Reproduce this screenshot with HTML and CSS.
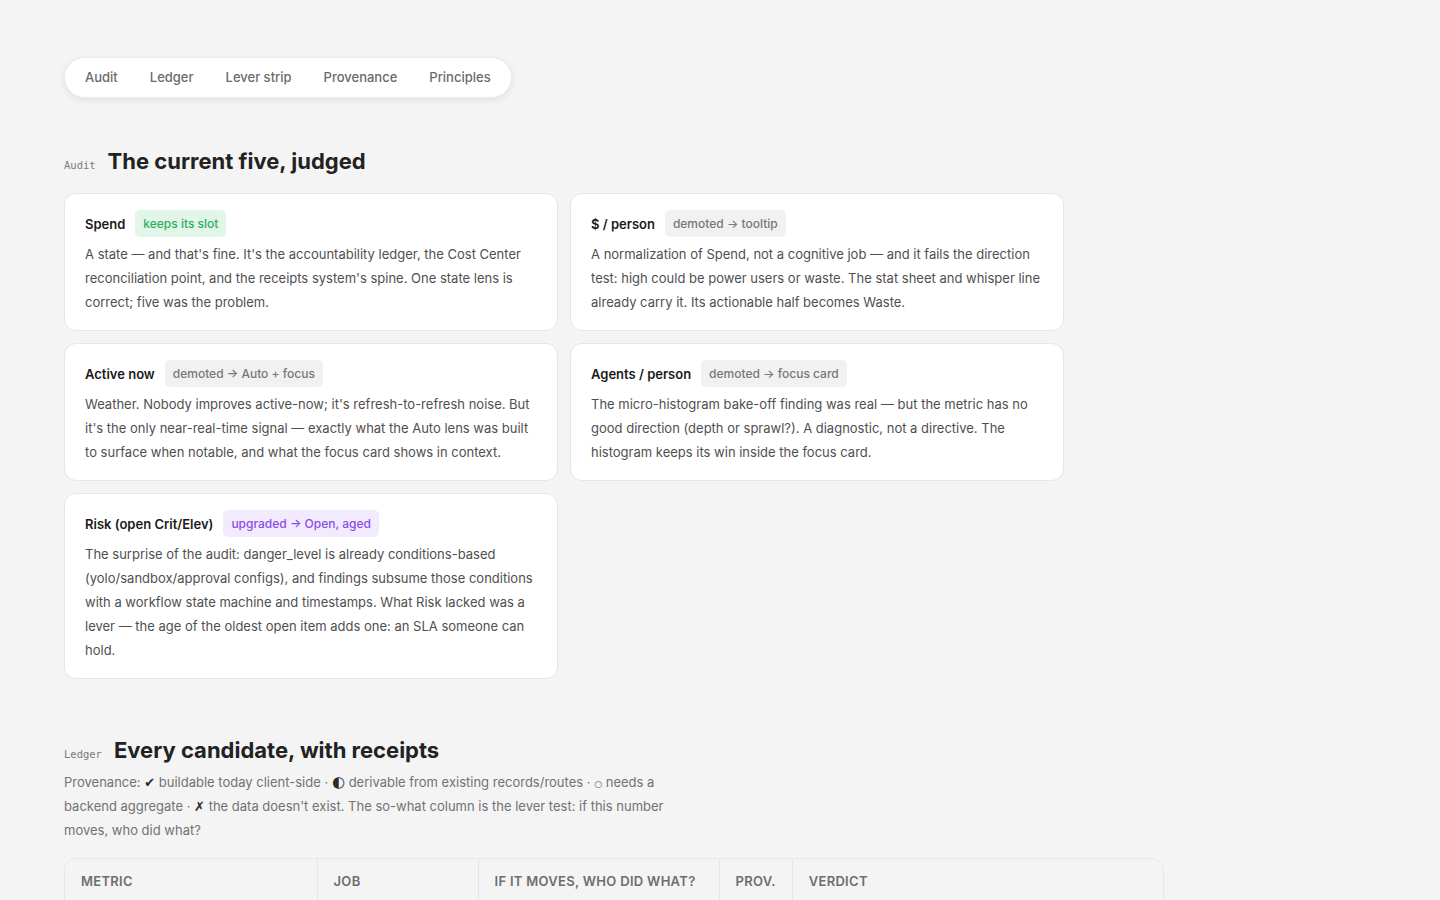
FILE: index.html
```html
<!DOCTYPE html>
<html lang="en">
<head>
<meta charset="utf-8">
<title>Lens audit</title>
<link rel="stylesheet" href="styles.css">
</head>
<body>
<main class="page">
  <nav class="tabs">
    <a class="tab" href="#audit">Audit</a>
    <a class="tab" href="#ledger">Ledger</a>
    <a class="tab" href="#lever">Lever strip</a>
    <a class="tab" href="#provenance">Provenance</a>
    <a class="tab" href="#principles">Principles</a>
  </nav>

  <section class="section" id="audit">
    <header class="section-head">
      <span class="kicker">Audit</span>
      <h2 class="section-title">The current five, judged</h2>
    </header>
    <div class="cards">
      <article class="card">
        <div class="card-head">
          <h3 class="card-title">Spend</h3>
          <span class="chip chip-keep">keeps its slot</span>
        </div>
        <p class="card-body">A state — and that's fine. It's the accountability ledger, the Cost Center reconciliation point, and the receipts system's spine. One state lens is correct; five was the problem.</p>
      </article>
      <article class="card">
        <div class="card-head">
          <h3 class="card-title">$ / person</h3>
          <span class="chip chip-demote">demoted → tooltip</span>
        </div>
        <p class="card-body">A normalization of Spend, not a cognitive job — and it fails the direction test: high could be power users or waste. The stat sheet and whisper line already carry it. Its actionable half becomes Waste.</p>
      </article>
      <article class="card">
        <div class="card-head">
          <h3 class="card-title">Active now</h3>
          <span class="chip chip-demote">demoted → Auto + focus</span>
        </div>
        <p class="card-body">Weather. Nobody improves active-now; it's refresh-to-refresh noise. But it's the only near-real-time signal — exactly what the Auto lens was built to surface when notable, and what the focus card shows in context.</p>
      </article>
      <article class="card">
        <div class="card-head">
          <h3 class="card-title">Agents / person</h3>
          <span class="chip chip-demote">demoted → focus card</span>
        </div>
        <p class="card-body">The micro-histogram bake-off finding was real — but the metric has no good direction (depth or sprawl?). A diagnostic, not a directive. The histogram keeps its win inside the focus card.</p>
      </article>
      <article class="card">
        <div class="card-head">
          <h3 class="card-title">Risk (open Crit/Elev)</h3>
          <span class="chip chip-upgrade">upgraded → Open, aged</span>
        </div>
        <p class="card-body">The surprise of the audit: danger_level is already conditions-based (yolo/sandbox/approval configs), and findings subsume those conditions with a workflow state machine and timestamps. What Risk lacked was a lever — the age of the oldest open item adds one: an SLA someone can hold.</p>
      </article>
    </div>
  </section>

  <section class="section" id="ledger">
    <header class="section-head">
      <span class="kicker">Ledger</span>
      <h2 class="section-title">Every candidate, with receipts</h2>
    </header>
    <p class="lede">Provenance: <span class="sym">✔</span> buildable today client-side · <span class="sym sym-half">◐</span> derivable from existing records/routes · <span class="sym sym-small">○</span> needs a backend aggregate · <span class="sym">✗</span> the data doesn't exist. The so-what column is the lever test: if this number moves, who did what?</p>
    <div class="table-wrap">
      <table class="ledger">
        <thead>
          <tr>
            <th class="col-metric">Metric</th>
            <th class="col-job">Job</th>
            <th class="col-sowhat">If it moves, who did what?</th>
            <th class="col-prov">Prov.</th>
            <th class="col-verdict">Verdict</th>
          </tr>
        </thead>
        <tbody>
          <tr>
            <td>Spend</td>
            <td>State</td>
            <td>Finance reconciles against the Cost Center</td>
            <td><span class="sym">✔</span></td>
            <td>Keep</td>
          </tr>
          <tr>
            <td>Waste</td>
            <td>Lever</td>
            <td>An owner trimmed idle seats or runaway agents</td>
            <td><span class="sym sym-half">◐</span></td>
            <td>Add</td>
          </tr>
        </tbody>
      </table>
    </div>
  </section>
</main>
</body>
</html>
```

FILE: styles.css
```css
* {
  box-sizing: border-box;
}

html,
body {
  margin: 0;
  padding: 0;
  background: #f4f4f4;
}

body {
  font-family: Inter, "Noto Sans", "Liberation Sans", sans-serif;
  color: #1f1f1f;
  -webkit-font-smoothing: antialiased;
}

.page {
  padding: 57px 64px 64px;
}

/* Section switcher */
.tabs {
  display: inline-flex;
  align-items: center;
  height: 41px;
  padding: 0 4px;
  background: #ffffff;
  border: 1px solid #ececec;
  border-radius: 999px;
  box-shadow: 0 2px 6px rgba(0, 0, 0, 0.08);
}

.tab {
  padding: 0 16px;
  font-size: 13px;
  font-weight: 500;
  color: #6b6b6b;
  text-decoration: none;
  line-height: 39px;
}

/* Sections */
.section {
  margin-top: 50px;
}

.section + .section {
  margin-top: 58px;
}

.section-head {
  display: flex;
  align-items: baseline;
  gap: 12px;
  margin-bottom: 19px;
}

.kicker {
  font-family: "DejaVu Sans Mono", "Liberation Mono", monospace;
  font-size: 10.5px;
  color: #7a7a7a;
}

.section-title {
  margin: 0;
  font-size: 22px;
  font-weight: 700;
  color: #222222;
}

/* Audit cards */
.cards {
  display: grid;
  grid-template-columns: repeat(2, 494px);
  gap: 12px;
}

.card {
  background: #ffffff;
  border: 1px solid #e6e6e6;
  border-radius: 12px;
  padding: 16px 20px;
}

.card-head {
  display: flex;
  align-items: center;
  gap: 10px;
  margin-bottom: 5px;
}

.card-title {
  margin: 0;
  font-size: 13px;
  font-weight: 600;
  color: #1a1a1a;
}

.chip {
  display: inline-block;
  padding: 4px 8px;
  border-radius: 5px;
  font-size: 12px;
  font-weight: 500;
  line-height: 19px;
}

.chip-keep {
  background: #e1f5e8;
  color: #2fae5c;
}

.chip-demote {
  background: #f1f1f1;
  color: #777777;
}

.chip-upgrade {
  background: #f1ebfd;
  color: #8b4ce8;
}

.card-body {
  margin: 0;
  font-size: 13px;
  line-height: 24px;
  color: #4f4f4f;
}

/* Ledger */
#ledger .section-head {
  margin-bottom: 7px;
}

.lede {
  max-width: 620px;
  margin: 0 0 16px;
  font-size: 13px;
  line-height: 24px;
  color: #727272;
}

.sym {
  font-family: "DejaVu Sans", sans-serif;
  line-height: 0;
  color: #2a2a2a;
}

.sym-half {
  font-size: 15px;
}

.sym-small {
  font-size: 9px;
  color: #555555;
}

.table-wrap {
  width: 1100px;
  border: 1px solid #e6e6e6;
  border-radius: 12px;
  overflow: hidden;
}

.ledger {
  width: 100%;
  border-collapse: collapse;
  font-size: 13px;
}

.ledger th {
  height: 44px;
  padding: 0 16px;
  text-align: left;
  font-size: 13px;
  font-weight: 600;
  letter-spacing: 0.3px;
  text-transform: uppercase;
  color: #6e6e6e;
  background: #f4f4f4;
  border-left: 1px solid #e6e6e6;
  border-bottom: 1px solid #e6e6e6;
}

.ledger th:first-child,
.ledger td:first-child {
  border-left: 0;
}

.ledger td {
  padding: 12px 16px;
  color: #4f4f4f;
  background: #ffffff;
  border-left: 1px solid #e6e6e6;
  border-bottom: 1px solid #eeeeee;
}

.col-metric { width: 252px; }
.col-job { width: 161px; }
.col-sowhat { width: 241px; }
.col-prov { width: 72px; }
```
